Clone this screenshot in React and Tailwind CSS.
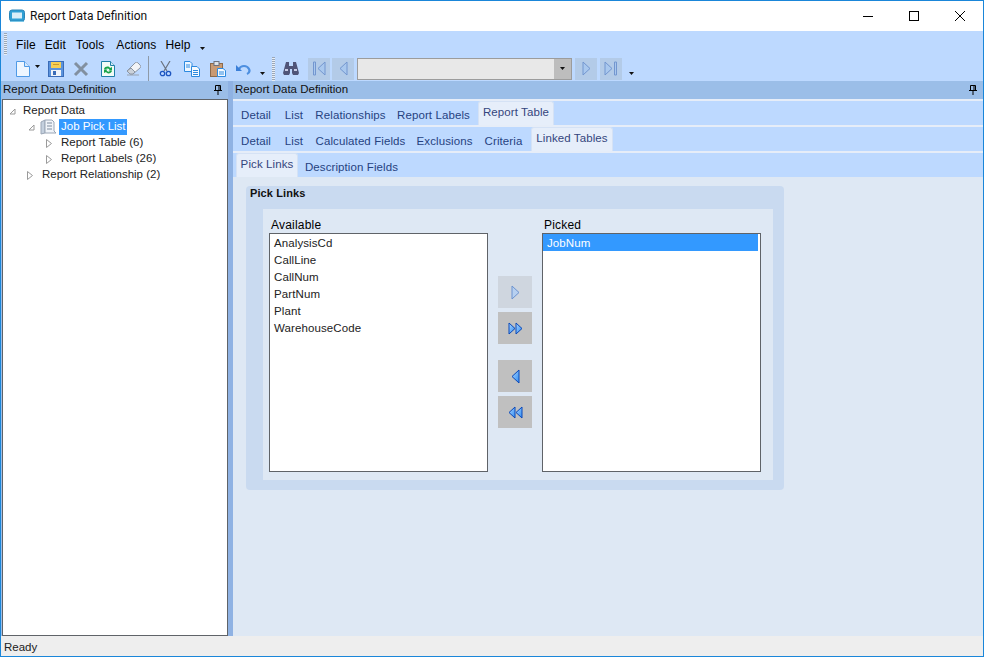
import React from "react";

const F = "[font-family:'Liberation_Sans',Arial,sans-serif]";

const Caret = () => (
  <svg width="5" height="3" viewBox="0 0 5 3" className="block"><path d="M0 0h5L2.5 3z" fill="#111" /></svg>
);

const Grip = ({ h = "h-[22px]" }) => (
  <div className={`w-[3px] ${h} bg-[repeating-linear-gradient(to_bottom,#9aa7b8_0,#9aa7b8_1px,#e8eef6_1px,#e8eef6_2px)]`} />
);

const Tab = ({ w, ml = 0, active, children }) => (
  <div
    style={{ width: w, marginLeft: ml }}
    className={
      active
        ? "h-[24px] -mt-[1px] pb-[1px] flex items-center justify-center rounded-t-[3px] bg-[#e6eefa] border-t border-x border-[#d5e2f5] text-[#34457d] shrink-0 whitespace-nowrap"
        : "h-[24px] pt-[5px] flex items-center justify-center text-[#26427f] shrink-0 whitespace-nowrap"
    }
  >
    {children}
  </div>
);

const TabRow = ({ children }) => (
  <div className="h-[24px] bg-[#bdd9ff] flex items-end text-[11.5px] tracking-[0.1px]">{children}</div>
);

const Tri = ({ open }) =>
  open ? (
    <svg width="7" height="7" viewBox="0 0 7 7" className="block"><path d="M6 1v5H1z" fill="none" stroke="#9a9a9a" /></svg>
  ) : (
    <svg width="6" height="9" viewBox="0 0 6 9" className="block"><path d="M.5.500l5 4-5 4z" fill="none" stroke="#9a9a9a" /></svg>
  );

const NavBtn = ({ children, ml = "ml-0" }) => (
  <div className={`w-[22px] h-[22px] ${ml} bg-[#b3cbe8] flex items-center justify-center shrink-0`}>{children}</div>
);

const Tool = ({ w, ml, children }) => (
  <div style={{ width: w, marginLeft: ml }} className="h-[20px] flex items-center justify-center shrink-0">{children}</div>
);

const Move = ({ kind, disabled }) => {
  const fill = disabled ? "#b7d0f0" : "url(#mv)";
  const stroke = disabled ? "#6d93cf" : "#0b48b8";
  return (
    <div className={`w-[34px] h-[32px] flex items-center justify-center ${disabled ? "bg-[#cfd6df]" : "bg-[#c0c0c0]"}`}>
      {kind === "r" && <svg width="9" height="15" viewBox="0 0 9 15"><path d="M1 1l7 6.500L1 14z" fill={fill} stroke={stroke} /></svg>}
      {kind === "rr" && (
        <svg width="15" height="13" viewBox="0 0 15 13">
          <path d="M1 1l6 5.500L1 12z" fill={fill} stroke={stroke} />
          <path d="M8 1l6 5.500L8 12z" fill={fill} stroke={stroke} />
        </svg>
      )}
      {kind === "l" && <svg width="9" height="15" viewBox="0 0 9 15"><path d="M8 1L1 7.500 8 14z" fill={fill} stroke={stroke} /></svg>}
      {kind === "ll" && (
        <svg width="15" height="13" viewBox="0 0 15 13">
          <path d="M7 1L1 6.500 7 12z" fill={fill} stroke={stroke} />
          <path d="M14 1L8 6.500 14 12z" fill={fill} stroke={stroke} />
        </svg>
      )}
    </div>
  );
};

const Pin = () => (
  <svg width="8" height="10" viewBox="0 0 8 10" className="block">
    <path d="M1.500.5h5v5h-5zM5 1v4M0 5.500h8M4 6v4" fill="none" stroke="#000" />
  </svg>
);

export default function App() {
  return (
    <div className={`w-[984px] h-[657px] flex flex-col border border-[#1a86d9] bg-white text-[12px] text-black overflow-hidden ${F}`}>
      <svg width="0" height="0" className="absolute">
        <defs>
          <linearGradient id="mv" x1="0" y1="0" x2="1" y2="1">
            <stop offset="0" stopColor="#a8d4ff" />
            <stop offset="1" stopColor="#2f8cf2" />
          </linearGradient>
        </defs>
      </svg>
      {/* title bar */}
      <div className="h-[30px] flex items-center bg-white shrink-0">
        <svg width="16" height="14" viewBox="0 0 16 14" className="ml-[8px] block">
          <rect x="0.500" y="1" width="15" height="11" rx="2.500" fill="#2f9fd4" stroke="#2a85b8" />
          <rect x="3" y="3.500" width="10" height="6" fill="#d8eef8" />
          <rect x="1" y="12" width="14" height="1" fill="#7cc6e6" />
        </svg>
        <span className="ml-[5px] text-[12px] [font-family:'Roboto',sans-serif] text-[#111]">Report Data Definition</span>
        <div className="ml-auto flex items-center h-full">
          <div className="w-[46px] h-full flex items-center justify-center">
            <div className="w-[10px] h-[1px] bg-black" />
          </div>
          <div className="w-[46px] h-full flex items-center justify-center">
            <div className="w-[10px] h-[10px] border border-black" />
          </div>
          <div className="w-[46px] h-full flex items-center justify-center">
            <svg width="10" height="10" viewBox="0 0 10 10"><path d="M0 0l10 10M10 0L0 10" stroke="#000" /></svg>
          </div>
        </div>
      </div>

      {/* toolbars */}
      <div className="h-[50px] bg-[#bdd9ff] shrink-0 flex flex-col">
        <div className="h-[25px] flex items-center pl-[3px]">
          <Grip />
          <div className="ml-[9px] flex items-center text-[12px] tracking-[0.1px] pt-[2px]">
            <span>File</span>
            <span className="ml-[9px]">Edit</span>
            <span className="ml-[10px]">Tools</span>
            <span className="ml-[12px]">Actions</span>
            <span className="ml-[9px]">Help</span>
            <span className="ml-[9px] mt-[7px]"><Caret /></span>
          </div>
        </div>
        <div className="h-[25px] flex items-center pl-[14px]">
          <Tool w={15} ml={0}>
            <svg width="14" height="16" viewBox="0 0 14 16">
              <path d="M.5.500h8l5 5v10H.5z" fill="#eef6ff" stroke="#4f9ae6" />
              <path d="M8.500.500v5h5" fill="#d6e8fb" stroke="#4f9ae6" />
            </svg>
          </Tool>
          <div className="ml-[5px] mb-[4px]"><Caret /></div>
          <Tool w={18} ml={7}>
            <svg width="16" height="16" viewBox="0 0 16 16">
              <rect x=".5" y=".5" width="15" height="15" fill="#5b93dc" stroke="#3a6cb8" />
              <rect x="3" y="1" width="10" height="6" fill="#f6cf55" />
              <rect x="5" y="3" width="6" height="1" fill="#c99a2e" />
              <rect x="3" y="9" width="10" height="6" fill="#f0f4fa" />
              <rect x="5" y="10" width="3" height="4" fill="#3a6cb8" />
            </svg>
          </Tool>
          <Tool w={18} ml={7}>
            <svg width="16" height="16" viewBox="0 0 16 16"><path d="M2 2l12 12M14 2L2 14" stroke="#8290a0" strokeWidth="3" /></svg>
          </Tool>
          <Tool w={16} ml={10}>
            <svg width="14" height="16" viewBox="0 0 14 16">
              <path d="M.5.500h9l4 4v11H.5z" fill="#f2fbf6" stroke="#1f7fa8" />
              <path d="M9.500.500v4h4" fill="#cfe9f2" stroke="#1f7fa8" />
              <path d="M3 8c1-3 5-3 6-1l2-1v3.500H7.500l1-1C7.500 7 5.500 7 4.500 8.500z" fill="#17a34a" />
              <path d="M11 10c-1 3-5 3-6 1l-2 1V8.500h3.500l-1 1c1 1.500 3 1.500 4 0z" fill="#17a34a" />
            </svg>
          </Tool>
          <Tool w={16} ml={9}>
            <svg width="15" height="14" viewBox="0 0 15 14">
              <path d="M1 9l8-8c1-1 2-1 3 0l2 2c1 1 1 2 0 3l-7 6H4z" fill="#f2f4f7" stroke="#8b95a3" />
              <path d="M1 9l3 3h3l2-2-4-4z" fill="#cbd2db" stroke="#8b95a3" />
              <path d="M1 13h12" stroke="#9aa3af" />
            </svg>
          </Tool>
          <div className="ml-[7px] w-[1px] h-[25px] bg-[#8e9aa8] shrink-0" />
          <Tool w={14} ml={9}>
            <svg width="13" height="16" viewBox="0 0 13 16">
              <path d="M2 0l6 10M11 0L5 10" stroke="#6b7480" strokeWidth="1.200" />
              <circle cx="3.500" cy="12.500" r="2.200" fill="none" stroke="#1d55c0" strokeWidth="1.300" />
              <circle cx="9.500" cy="12.500" r="2.200" fill="none" stroke="#1d55c0" strokeWidth="1.300" />
            </svg>
          </Tool>
          <Tool w={17} ml={11}>
            <svg width="16" height="16" viewBox="0 0 16 16">
              <path d="M.5.500H6l2 2v8H.5z" fill="#eef6ff" stroke="#2c8ae0" />
              <path d="M7.500 5.500H13l2.500 2.500v7.500h-8z" fill="#f5faff" stroke="#2c8ae0" />
              <path d="M9 9.500h5M9 11.500h5M9 13.500h5M2 4h4M2 6h4" stroke="#2c8ae0" />
            </svg>
          </Tool>
          <Tool w={17} ml={9}>
            <svg width="16" height="16" viewBox="0 0 16 16">
              <rect x=".5" y="2.500" width="12" height="13" fill="#c99a73" stroke="#8a6a4d" />
              <rect x="4" y=".5" width="5" height="4" fill="#dfe3e8" stroke="#6b7280" />
              <path d="M7.500 7.500H13l2.500 2v6h-8z" fill="#f5faff" stroke="#2c8ae0" />
              <path d="M9 11h5M9 13h5" stroke="#2c8ae0" />
            </svg>
          </Tool>
          <Tool w={15} ml={10}>
            <svg width="15" height="12" viewBox="0 0 15 12">
              <path d="M3 6c2-4 8-4 10 0 1 2 0 4-2 5" fill="none" stroke="#4d8fe0" strokeWidth="2.200" />
              <path d="M0 2v6h6z" fill="#3a7fd8" />
            </svg>
          </Tool>
          <div className="ml-[9px] mt-[10px]"><Caret /></div>
          <div className="ml-[7px]"><Grip h="h-[24px]" /></div>
          <Tool w={16} ml={8}>
            <svg width="16" height="13" viewBox="0 0 16 13">
              <path d="M3 0h3v4h4V0h3l3 11-1 2H10l-1-2V7H7v4l-1 2H1l-1-2z" fill="#4f5478" />
              <path d="M2 8h3M11 8h3" stroke="#c8cce4" strokeWidth="2" />
            </svg>
          </Tool>
          <NavBtn ml="ml-[9px]">
            <svg width="14" height="15" viewBox="0 0 14 15"><path d="M1.500 1v13h2V1z M13 1L6 7.500l7 6.500z" fill="#a9c8ee" stroke="#7396cf" /></svg>
          </NavBtn>
          <NavBtn ml="ml-[2px]">
            <svg width="9" height="15" viewBox="0 0 9 15"><path d="M8 1L1 7.500 8 14z" fill="#a9c8ee" stroke="#7396cf" /></svg>
          </NavBtn>
          <div className="ml-[3px] w-[215px] h-[22px] flex border border-[#9c9c9c] bg-[#e8e8e8] shrink-0">
            <div className="flex-1" />
            <div className="w-[17px] bg-[#bdbdbd] flex items-center justify-center"><Caret /></div>
          </div>
          <NavBtn ml="ml-[3px]">
            <svg width="9" height="15" viewBox="0 0 9 15"><path d="M1 1l7 6.500L1 14z" fill="#a9c8ee" stroke="#7396cf" /></svg>
          </NavBtn>
          <NavBtn ml="ml-[3px]">
            <svg width="14" height="15" viewBox="0 0 14 15"><path d="M1 1l7 6.500L1 14z M10.500 1v13h2V1z" fill="#a9c8ee" stroke="#7396cf" /></svg>
          </NavBtn>
          <div className="ml-[7px] mt-[10px]"><Caret /></div>
        </div>
      </div>

      {/* body */}
      <div className="flex-1 flex min-h-0">
        {/* left */}
        <div className="w-[227px] flex flex-col shrink-0 bg-[#9bbee8]">
          <div className="h-[18px] flex items-center pl-[2px] pr-[6px] justify-between text-[11.5px] text-[#111] shrink-0">
            <span>Report Data Definition</span>
            <Pin />
          </div>
          <div className="flex-1 ml-[1px] bg-white border border-[#5f6368] pt-[3px] text-[11.5px] text-[#222] whitespace-nowrap">
            <div className="h-[16px] flex items-center pl-[6px]">
              <Tri open />
              <span className="ml-[7px]">Report Data</span>
            </div>
            <div className="h-[16px] flex items-center pl-[25px]">
              <Tri open />
              <svg width="16" height="16" viewBox="0 0 16 16" className="ml-[5px] block">
                <path d="M1 3l4-2v13l-4 1z" fill="#c4d0de" stroke="#9aa6b6" />
                <path d="M5 1h7l2 2v9l2 2H5z" fill="#f0f4f9" stroke="#9aa6b6" />
                <path d="M7 4h5M7 7h5M7 10h5" stroke="#7f8c9e" />
              </svg>
              <span className="ml-[3px] w-[68px] h-[16px] pl-[2px] flex items-center bg-[#3399ff] text-white">Job Pick List</span>
            </div>
            <div className="h-[16px] flex items-center pl-[43px]">
              <Tri />
              <span className="ml-[9px]">Report Table (6)</span>
            </div>
            <div className="h-[16px] flex items-center pl-[43px]">
              <Tri />
              <span className="ml-[9px]">Report Labels (26)</span>
            </div>
            <div className="h-[16px] flex items-center pl-[24px]">
              <Tri />
              <span className="ml-[9px]">Report Relationship (2)</span>
            </div>
          </div>
        </div>
        {/* splitter */}
        <div className="w-[5px] bg-[#8fb2e3] shrink-0" />
        {/* right */}
        <div className="flex-1 min-w-0 flex flex-col bg-[#dee8f4]">
          <div className="h-[18px] bg-[#9bbee8] flex items-center justify-between pl-[2px] pr-[6px] text-[11.5px] text-[#111] shrink-0">
            <span>Report Data Definition</span>
            <Pin />
          </div>
          <div className="h-[2px] bg-[#e6edf8] shrink-0" />
          <TabRow>
            <Tab w={44} ml={1}>Detail</Tab>
            <Tab w={32}>List</Tab>
            <Tab w={81}>Relationships</Tab>
            <Tab w={85}>Report Labels</Tab>
            <Tab w={76} ml={2} active>Report Table</Tab>
          </TabRow>
          <div className="h-[2px] bg-[#e6edf8] shrink-0" />
          <TabRow>
            <Tab w={44} ml={1}>Detail</Tab>
            <Tab w={32}>List</Tab>
            <Tab w={101}>Calculated Fields</Tab>
            <Tab w={67}>Exclusions</Tab>
            <Tab w={51}>Criteria</Tab>
            <Tab w={82} ml={2} active>Linked Tables</Tab>
          </TabRow>
          <div className="h-[2px] bg-[#e6edf8] shrink-0" />
          <TabRow>
            <Tab w={62} ml={3} active>Pick Links</Tab>
            <Tab w={107}>Description Fields</Tab>
          </TabRow>

          {/* content */}
          <div className="flex-1 pt-[9px] pl-[13px]">
            <div className="w-[538px] h-[304px] bg-[#c9daf0] rounded-[4px] px-[17px] pb-[10px] flex flex-col">
              <div className="h-[23px] -ml-[13px] text-[11px] leading-[14px] font-bold tracking-[0.1px] text-[#111]">Pick Links</div>
              <div className="w-[510px] flex-1 bg-[#dee8f4] pl-[6px] pt-[9px] flex">
                <div className="w-[219px] flex flex-col shrink-0">
                  <div className="h-[15px] pl-[2px] text-[12px] tracking-[0.2px] leading-[15px]">Available</div>
                  <div className="h-[239px] bg-white border border-[#5f6368] px-[4px] pt-[1px] text-[11.5px] tracking-[0.1px] text-[#222]">
                    {["AnalysisCd", "CallLine", "CallNum", "PartNum", "Plant", "WarehouseCode"].map((t) => (
                      <div key={t} className="h-[17px] leading-[17px]">{t}</div>
                    ))}
                  </div>
                </div>
                <div className="w-[34px] ml-[10px] pt-[58px] flex flex-col shrink-0">
                  <Move kind="r" disabled />
                  <div className="mt-[4px]"><Move kind="rr" /></div>
                  <div className="mt-[16px]"><Move kind="l" /></div>
                  <div className="mt-[4px]"><Move kind="ll" /></div>
                </div>
                <div className="w-[219px] ml-[10px] flex flex-col shrink-0">
                  <div className="h-[15px] pl-[2px] text-[12px] tracking-[0.2px] leading-[15px]">Picked</div>
                  <div className="h-[239px] bg-white border border-[#5f6368] text-[11.5px] tracking-[0.1px]">
                    <div className="w-[215px] h-[17px] leading-[19px] bg-[#3399ff] text-white pl-[4px]">JobNum</div>
                  </div>
                </div>
              </div>
            </div>
          </div>
        </div>
      </div>

      {/* status */}
      <div className="h-[20px] bg-[#eeeeee] flex items-center pl-[3px] pt-[3px] text-[11.5px] text-[#222] shrink-0">Ready</div>
    </div>
  );
}
